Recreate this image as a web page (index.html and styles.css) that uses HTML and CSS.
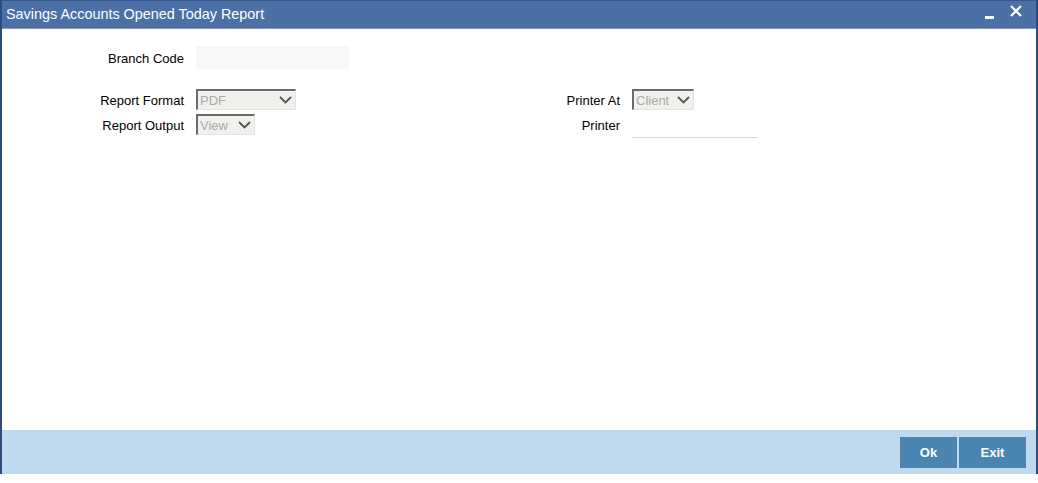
FILE: index.html
```html
<!DOCTYPE html>
<html lang="en">
<head>
  <meta charset="UTF-8" />
  <title>Savings Accounts Opened Today Report</title>
  <link rel="stylesheet" href="styles.css">
</head>
<body>

  <div class="window">
    <header class="title-bar">
      <div class="title">Savings Accounts Opened Today Report</div>
      <div class="window-buttons">
        <span class="btn-min"></span>
        <svg class="btn-close" width="12" height="12" viewBox="0 0 12 12">
          <path d="M1 1 L11 11 M11 1 L1 11" stroke="#fff" stroke-width="2.2"/>
        </svg>
      </div>
    </header>

    <main class="content">
      <div class="row branch-row">
        <label class="lbl">Branch Code</label>
        <div class="text-field"></div>
      </div>

      <div class="columns">
        <div class="col">
          <div class="row">
            <label class="lbl">Report Format</label>
            <div class="select-box w-format">
              <span>PDF</span>
              <svg width="13" height="8" viewBox="0 0 13 8"><path d="M1 1 L6.5 6.5 L12 1" fill="none" stroke="#555" stroke-width="1.8"/></svg>
            </div>
          </div>
          <div class="row">
            <label class="lbl">Report Output</label>
            <div class="select-box w-output">
              <span>View</span>
              <svg width="13" height="8" viewBox="0 0 13 8"><path d="M1 1 L6.5 6.5 L12 1" fill="none" stroke="#555" stroke-width="1.8"/></svg>
            </div>
          </div>
        </div>
        <div class="col col-right">
          <div class="row">
            <label class="lbl">Printer At</label>
            <div class="select-box w-printer">
              <span>Client</span>
              <svg width="13" height="8" viewBox="0 0 13 8"><path d="M1 1 L6.5 6.5 L12 1" fill="none" stroke="#555" stroke-width="1.8"/></svg>
            </div>
          </div>
          <div class="row">
            <label class="lbl">Printer</label>
            <div class="line-field"></div>
          </div>
        </div>
      </div>
    </main>

    <footer class="footer">
      <button class="action-btn btn-ok">Ok</button>
      <button class="action-btn btn-exit">Exit</button>
    </footer>
  </div>

</body>
</html>
```

FILE: styles.css
```css
body {
  margin: 0;
  font-family: Arial, 'Liberation Sans', sans-serif;
  background-color: #fff;
}

.window {
  width: 1038px;
  height: 474px;
  border-left: 2px solid #2b4c7e;
  border-right: 2px solid #2b4c7e;
  box-sizing: border-box;
  display: flex;
  flex-direction: column;
}

.title-bar {
  height: 29px;
  background-color: #4a70a6;
  border-top: 1px solid #34578c;
  border-bottom: 1px solid #8a9cb0;
  box-sizing: border-box;
  display: flex;
  align-items: center;
  justify-content: space-between;
  padding: 0 14px 2px 4px;
}

.title {
  color: #fff;
  font-size: 14.4px;
}

.window-buttons {
  display: flex;
  align-items: center;
  gap: 16px;
}

.btn-min {
  width: 9px;
  height: 3px;
  background-color: #fff;
  margin-top: 8px;
}

.btn-close {
  display: block;
  margin-top: -6px;
}

.content {
  flex: 1;
  padding-top: 17px;
  font-size: 13px;
  color: #000;
}

.row {
  display: flex;
  align-items: center;
  height: 25px;
}

.lbl {
  width: 182px;
  text-align: right;
  padding-right: 12px;
  padding-top: 1px;
}

.branch-row {
  height: 23px;
  margin-bottom: 18px;
}

.text-field {
  width: 153px;
  height: 23px;
  background-color: #f7f7f7;
}

.columns {
  display: flex;
}

.col-right {
  margin-left: 150px;
}

.col-right .lbl {
  width: 174px;
}

.select-box {
  height: 21px;
  box-sizing: border-box;
  background-color: #f0f0ec;
  border-top: 2px solid #6b6b6b;
  border-left: 2px solid #6b6b6b;
  border-right: 1px solid #e3e3e0;
  border-bottom: 1px solid #e3e3e0;
  display: flex;
  align-items: center;
  justify-content: space-between;
  padding: 0 3px 0 2px;
  color: #a8a8a8;
  font-size: 13px;
}

.w-format {
  width: 100px;
}

.w-output {
  width: 59px;
}

.w-printer {
  width: 62px;
}

.line-field {
  align-self: flex-end;
  width: 126px;
  height: 22px;
  border-bottom: 1px solid #d6d6d6;
  margin-bottom: -1px;
}

.footer {
  height: 44px;
  background-color: #bfd9ed;
  display: flex;
  justify-content: flex-end;
  align-items: center;
  gap: 2px;
  padding-right: 10px;
}

.action-btn {
  height: 31px;
  background-color: #4a84b0;
  color: #fff;
  border: none;
  font-family: Arial, 'Liberation Sans', sans-serif;
  font-size: 13px;
  font-weight: bold;
  cursor: pointer;
}

.btn-ok {
  width: 57px;
}

.btn-exit {
  width: 67px;
}
```
